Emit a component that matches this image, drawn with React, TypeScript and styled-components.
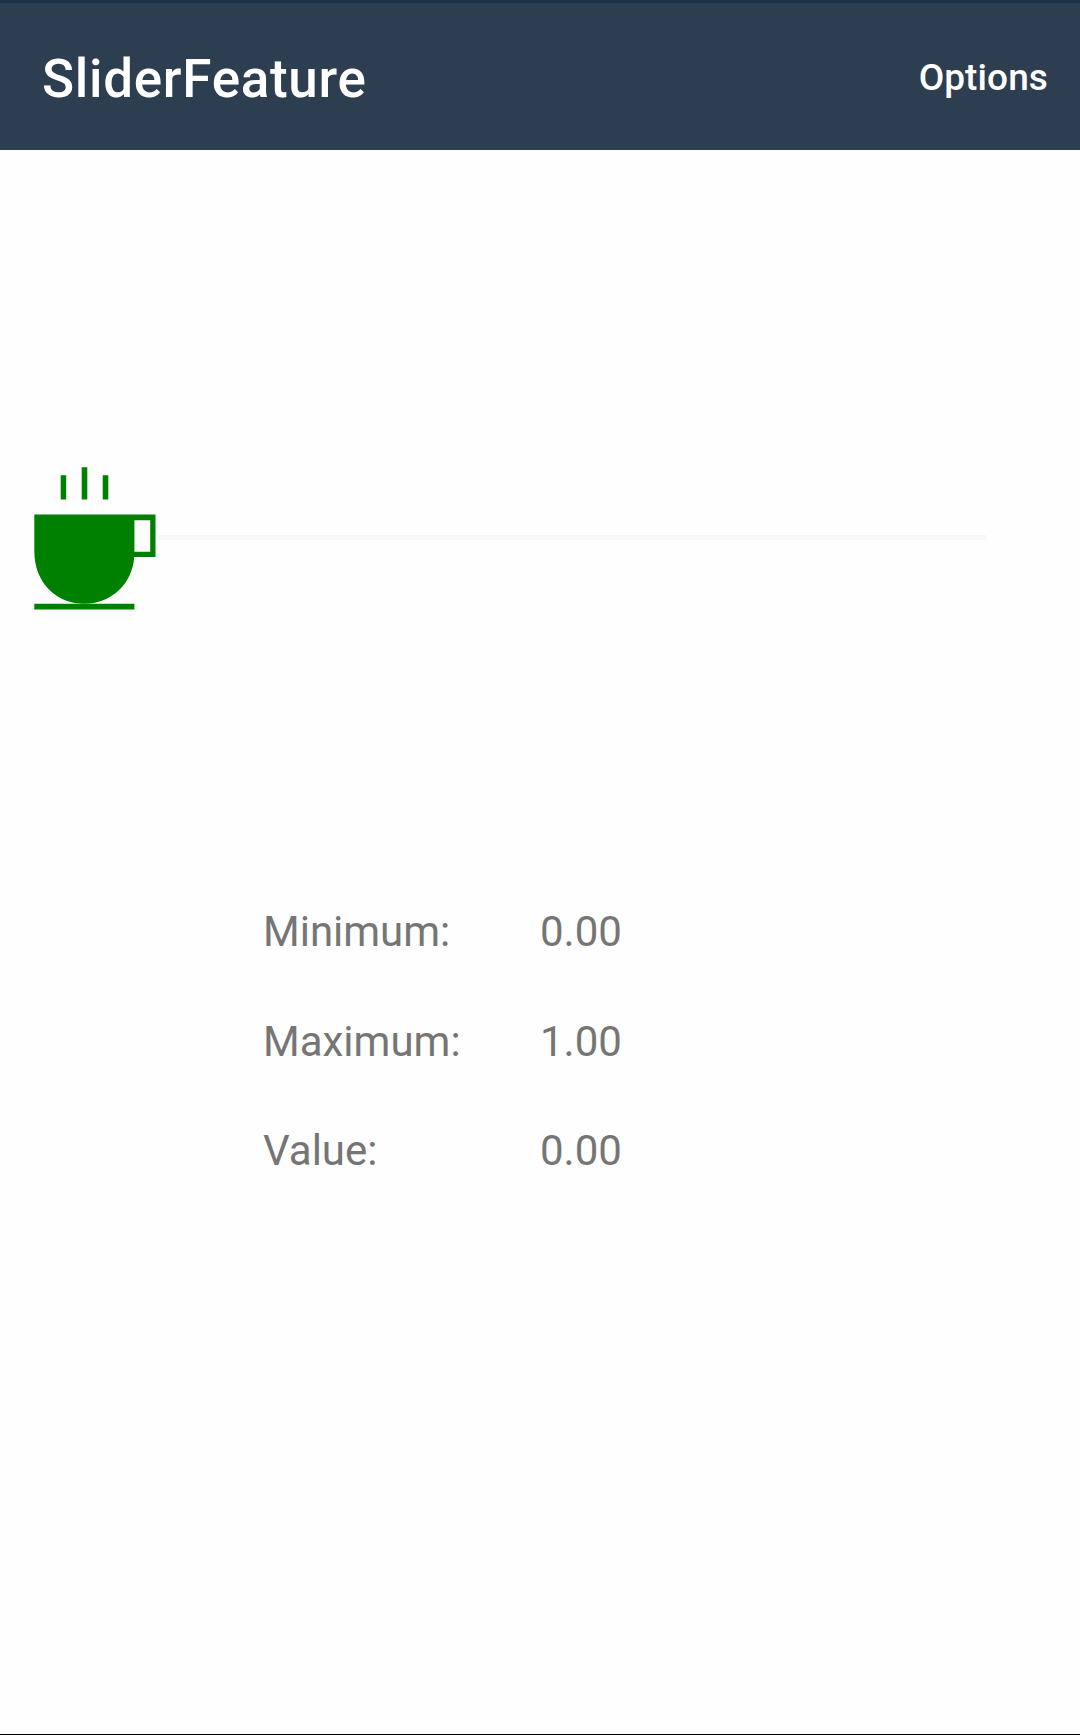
import React from 'react';
import styled, { createGlobalStyle } from 'styled-components';

const GlobalStyle = createGlobalStyle`
  *, *::before, *::after { box-sizing: border-box; }
  html, body { margin: 0; padding: 0; background: #fefefe; }
`;

const Screen = styled.div`
  display: flex;
  flex-direction: column;
  width: 1080px;
  height: 1735px;
  overflow: hidden;
  background: #fefefe;
  border-bottom: 1px solid #000;
  font-family: Roboto, sans-serif;
`;

const Toolbar = styled.header`
  display: flex;
  flex: none;
  align-items: center;
  justify-content: space-between;
  height: 150px;
  padding: 4px 32px 0 42px;
  border-top: 3px solid #1b3147;
  background: #2d3e50;
  color: #fff;
`;

const Title = styled.h1`
  margin: 0;
  font-size: 53px;
  font-weight: 500;
  line-height: 62px;
  letter-spacing: 0.7px;
`;

const OptionsButton = styled.button`
  margin: 0 0 2px;
  padding: 0;
  border: 0;
  background: none;
  color: inherit;
  font: 500 37px/44px Roboto, sans-serif;
  letter-spacing: 0.1px;
`;

const SliderArea = styled.section`
  display: flex;
  flex: none;
  align-items: center;
  height: 757px;
  padding: 18px 94px 0 34px;
`;

const Thumb = styled.svg`
  flex: none;
  display: block;
  width: 124px;
  height: 145px;
`;

const Track = styled.div`
  flex: 1;
  height: 5px;
  background: #f7f7f7;
`;

const Readout = styled.dl`
  display: grid;
  grid-template-columns: 277px auto;
  grid-auto-rows: 109.5px;
  align-items: start;
  justify-content: start;
  margin: 0;
  padding-left: 263px;
  color: #757575;
  font-size: 42px;
  line-height: 50px;
`;

const Label = styled.dt`
  margin: 0;
`;

const Value = styled.dd`
  margin: 0;
`;

const rows = [
  ['Minimum:', '0.00'],
  ['Maximum:', '1.00'],
  ['Value:', '0.00'],
];

function CoffeeThumb() {
  return (
    <Thumb viewBox="34 465 124 145" fill="#008000">
      <path d="M60.7 475.2H66.2V499.4H60.7ZM81.7 467.3H87.3V499.4H81.7ZM102.7 475.2H108.3V499.4H102.7Z" />
      <path
        fillRule="evenodd"
        d="M34.3 514.4H155.5V557H134.2C132.5 584 111 603.8 84.3 603.8C57.5 603.8 34.3 584 34.3 551ZM134.4 520.2V551.8H150.2V520.2Z"
      />
      <path d="M34.3 603.8H134.4V609.6H34.3Z" />
    </Thumb>
  );
}

export default function App() {
  return (
    <>
      <GlobalStyle />
      <Screen>
        <Toolbar>
          <Title>SliderFeature</Title>
          <OptionsButton>Options</OptionsButton>
        </Toolbar>
        <SliderArea>
          <CoffeeThumb />
          <Track />
        </SliderArea>
        <Readout>
          {rows.map(([label, value]) => (
            <React.Fragment key={label}>
              <Label>{label}</Label>
              <Value>{value}</Value>
            </React.Fragment>
          ))}
        </Readout>
      </Screen>
    </>
  );
}
